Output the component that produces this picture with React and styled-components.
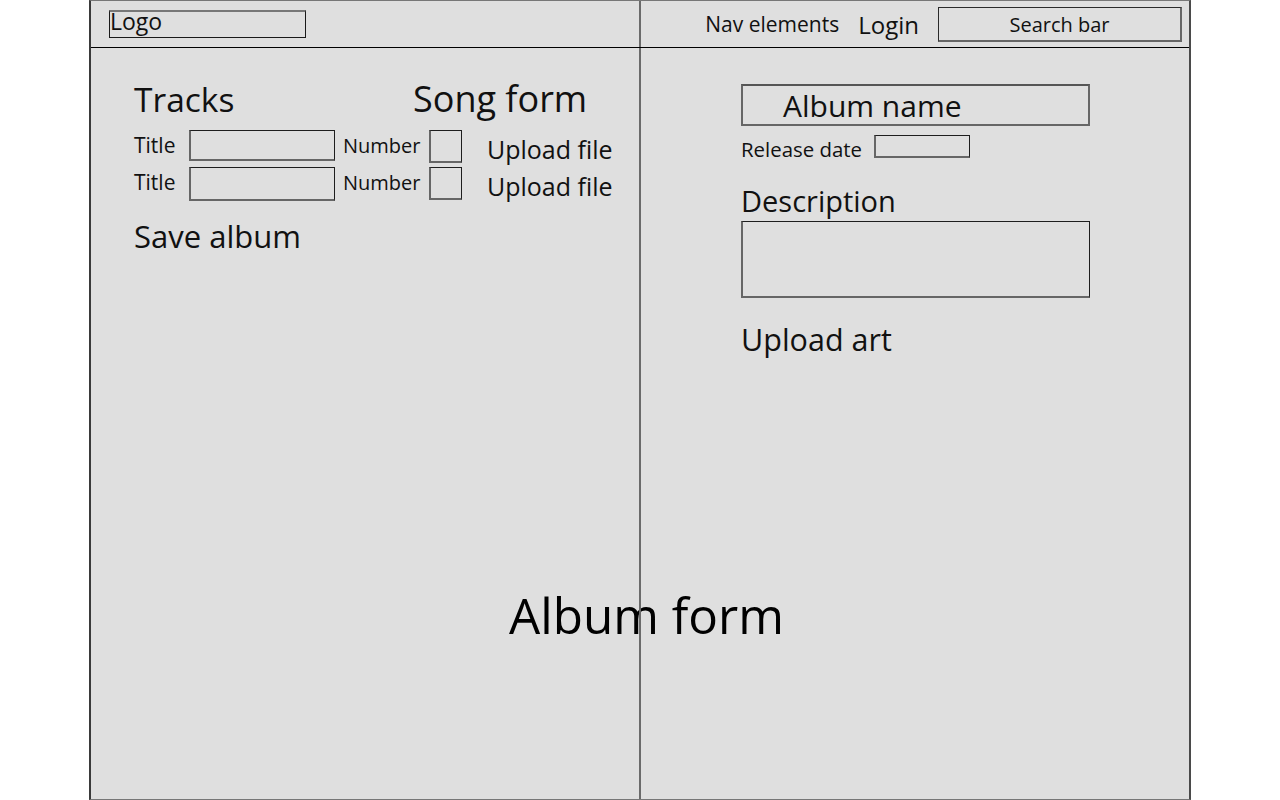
import React from "react";
import styled, { createGlobalStyle } from "styled-components";

const Global = createGlobalStyle`
  html, body {
    margin: 0;
    padding: 0;
    background: #ffffff;
    overflow: hidden;
  }
  body {
    font-family: "Open Sans", "Noto Sans", "Liberation Sans", sans-serif;
    color: #111111;
  }
  * { box-sizing: border-box; }
`;

const Frame = styled.div`
  margin-left: 89px;
  width: 1102px;
  height: 800px;
  display: flex;
  flex-direction: column;
  background: #dfdfdf;
  border-top: 1px solid #777777;
  border-bottom: 1px solid #777777;
  border-left: 2px solid #3a3a3a;
  border-right: 2px solid #4a4a4a;
`;

const Header = styled.header`
  display: grid;
  grid-template-columns: 550px 1fr;
  height: 47px;
  border-bottom: 1px solid #000000;
  flex-shrink: 0;
`;

const HeaderLeft = styled.div`
  display: flex;
  align-items: center;
  padding-left: 18px;
  border-right: 2px solid #6a6a6a;
`;

const HeaderRight = styled.nav`
  display: flex;
  align-items: center;
  justify-content: flex-end;
  gap: 19px;
  padding-right: 7px;
`;

const LogoBox = styled.div`
  width: 197px;
  height: 28px;
  border: 1px solid #1a1a1a;
  border-top: 2px solid #777777;
  font-size: 23px;
  line-height: 18px;
`;

const NavText = styled.span`
  font-size: ${(p) => p.$size}px;
  white-space: nowrap;
`;

const SearchBox = styled.div`
  width: 244px;
  height: 35px;
  display: flex;
  align-items: center;
  justify-content: center;
  padding-top: 2px;
  font-size: 20px;
  border: 1px solid #2a2a2a;
  border-right: 2px solid #666666;
  border-bottom: 2px solid #666666;
`;

const Body = styled.main`
  flex: 1;
  position: relative;
  z-index: 0;
  display: grid;
  grid-template-columns: 550px 1fr;
`;

const LeftPane = styled.section`
  border-right: 2px solid #6a6a6a;
  padding: 26px 0 0 43px;
  display: flex;
  flex-direction: column;
  align-items: flex-start;
`;

const RightPane = styled.section`
  padding: 36px 0 0 100px;
  display: flex;
  flex-direction: column;
  align-items: flex-start;
`;

const HeadingRow = styled.div`
  display: grid;
  grid-template-columns: 279px auto;
  align-items: baseline;
`;

const Heading = styled.div`
  font-size: ${(p) => p.$size}px;
  line-height: normal;
  white-space: nowrap;
  margin-top: ${(p) => p.$mt || 0}px;
`;

const TrackList = styled.div`
  margin-top: 7px;
  display: flex;
  flex-direction: column;
  gap: 4px;
`;

const TrackRow = styled.div`
  display: grid;
  grid-template-columns: 55px 154px 86px 58px auto;
  align-items: start;
  height: 33px;
`;

const Label = styled.span`
  font-size: ${(p) => p.$size || 20}px;
  white-space: nowrap;
  align-self: center;
  position: relative;
  top: ${(p) => p.$dy || 0}px;
`;

const Field = styled.div`
  width: ${(p) => p.$w}px;
  height: ${(p) => p.$h}px;
  margin-top: ${(p) => p.$mt || 0}px;
  border: 1px solid #1e1e1e;
  border-bottom: 2px solid #666666;
  border-left: 2px solid #666666;
`;

const AlbumNameBox = styled.div`
  width: 349px;
  height: 42px;
  display: flex;
  align-items: center;
  padding-left: 40px;
  font-size: 30px;
  border: 2px solid #666666;
  border-top-color: #555555;
`;

const ReleaseRow = styled.div`
  margin-top: 9px;
  display: flex;
  align-items: flex-start;
  gap: 12px;
`;

const CanvasLabel = styled.div`
  position: absolute;
  z-index: -1;
  top: 533px;
  left: 0;
  right: 0;
  padding-left: 13px;
  text-align: center;
  font-size: 49.4px;
  line-height: normal;
  color: #000000;
`;

const tracks = [
  { id: 1, inputH: 31 },
  { id: 2, inputH: 34 },
];

export default function App() {
  return (
    <>
      <Global />
      <Frame>
        <Header>
          <HeaderLeft>
            <LogoBox>Logo</LogoBox>
          </HeaderLeft>
          <HeaderRight>
            <NavText $size={21}>Nav elements</NavText>
            <NavText $size={24}>Login</NavText>
            <SearchBox>Search bar</SearchBox>
          </HeaderRight>
        </Header>
        <Body>
          <LeftPane>
            <HeadingRow>
              <Heading $size={33.5}>Tracks</Heading>
              <Heading $size={36}>Song form</Heading>
            </HeadingRow>
            <TrackList>
              {tracks.map((t) => (
                <TrackRow key={t.id}>
                  <Label $size={21} $dy={-2}>Title</Label>
                  <Field $w={146} $h={t.inputH} />
                  <Label $size={20} $dy={-2}>Number</Label>
                  <Field $w={33} $h={33} />
                  <Label $size={25} $dy={2}>Upload file</Label>
                </TrackRow>
              ))}
            </TrackList>
            <Heading $size={31} $mt={15}>Save album</Heading>
          </LeftPane>
          <RightPane>
            <AlbumNameBox>Album name</AlbumNameBox>
            <ReleaseRow>
              <Label $size={20.4}>Release date</Label>
              <Field $w={96} $h={23} />
            </ReleaseRow>
            <Heading $size={29} $mt={18}>Description</Heading>
            <Field $w={349} $h={77} $mt={1} />
            <Heading $size={30.5} $mt={20}>Upload art</Heading>
          </RightPane>
          <CanvasLabel>Album form</CanvasLabel>
        </Body>
      </Frame>
    </>
  );
}
